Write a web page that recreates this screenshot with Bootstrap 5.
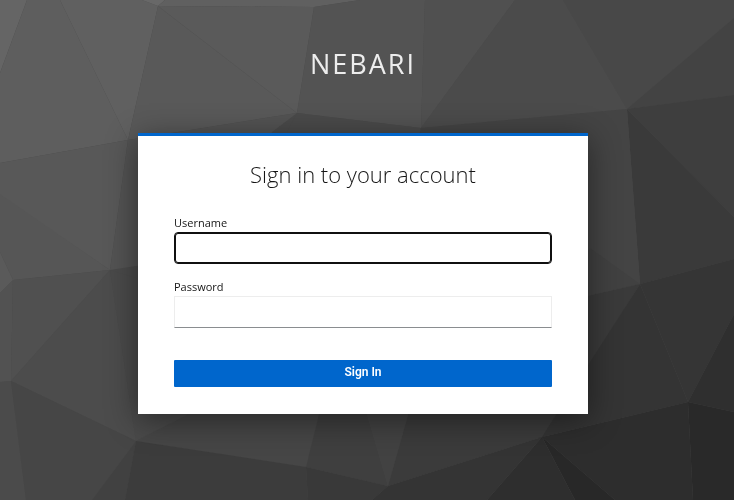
<!DOCTYPE html>
<html lang="en">
<head>
<meta charset="utf-8">
<meta name="viewport" content="width=device-width, initial-scale=1">
<title>Sign in to Nebari</title>
<link href="https://cdn.jsdelivr.net/npm/bootstrap@5.3.0/dist/css/bootstrap.min.css" rel="stylesheet">
<style>
  body { font-family: "Open Sans", sans-serif; background: #444; color: #151515; }
  .backdrop { z-index: -1; }
  .login-page { padding: 48px 16px 48px 8px; }
  .realm-name { font-size: 27px; line-height: 32px; letter-spacing: 2px; color: #ededed; margin-bottom: 53px; }
  .login-panel { max-width: 450px; border-top: 3px solid #06c; padding: 23px 36px 27px; box-shadow: 0 6px 30px rgba(0, 0, 0, .45); }
  .login-title { font-size: 22px; line-height: 30px; font-weight: 300; margin-bottom: 27px; }
  .field-label { font-size: 11px; line-height: 14px; margin-bottom: 2px; }
  .field { height: 32px; border: 1px solid #ededed; border-bottom-color: #8a8d90; border-radius: 0; font-size: 14px; padding: 4px 8px; }
  .field:focus { border-color: #101010; box-shadow: inset 0 0 0 1px #101010; border-radius: 4px; }
  .sign-in { background: #06c; color: #fff; font: 600 12px/17px Roboto, sans-serif; padding: 4px 8px 6px; border: 0; border-radius: 1px; margin-top: 32px; }
  .sign-in:hover { background: #004080; color: #fff; }
</style>
</head>
<body>
<svg class="backdrop position-fixed top-0 start-0 w-100 h-100" viewBox="0 0 734 500" preserveAspectRatio="xMidYMid slice" aria-hidden="true">
  <rect width="734" height="500" fill="#4a4a4a"/>
  <path fill="#656565" d="M0 0H27L0 73Z"/>
  <path fill="#5e5e5e" d="M27 0H60L128 140L0 163V73Z"/>
  <path fill="#606060" d="M60 0H142L158 6L128 140Z"/>
  <path fill="#686868" d="M142 0H165L158 6Z"/>
  <path fill="#606060" d="M165 0H360L314 7L158 6Z"/>
  <path fill="#595959" d="M158 6L297 113L128 140Z"/>
  <path fill="#5a5a5a" d="M158 6L314 7L297 113Z"/>
  <path fill="#585858" d="M0 163L128 140L110 270L0 196Z"/>
  <path fill="#565656" d="M0 194L110 270L13 280L0 252Z"/>
  <path fill="#5a5a5a" d="M0 252L13 280L0 293Z"/>
  <path fill="#525252" d="M0 293L13 280L11 381L0 382Z"/>
  <path fill="#505050" d="M13 280L110 270L11 381Z"/>
  <path fill="#4c4c4c" d="M11 381L110 270L136 441Z"/>
  <path fill="#4b4b4b" d="M0 382L11 381L26 500H0Z"/>
  <path fill="#464646" d="M11 381L136 441L92 500H26Z"/>
  <path fill="#414141" d="M136 441L92 500H125Z"/>
  <path fill="#535353" d="M128 140L297 113L272 132L240 250L110 270Z"/>
  <path fill="#4a4a4a" d="M110 270L240 310L190 413L136 441Z"/>
  <path fill="#464646" d="M136 441L240 388H326L306 467Z"/>
  <path fill="#3c3c3c" d="M136 441L306 467L308 500H125Z"/>
  <path fill="#535353" d="M314 7L360 0H425L421 128L297 113Z"/>
  <path fill="#505050" d="M425 0H515L421 128Z"/>
  <path fill="#4b4b4b" d="M515 0H563L627 109L421 128Z"/>
  <path fill="#484848" d="M563 0H734V18L627 109Z"/>
  <path fill="#434343" d="M734 18V95L627 109Z"/>
  <path fill="#3e3e3e" d="M734 95V217L627 109Z"/>
  <path fill="#3a3a3a" d="M627 109L734 217V259L640 284Z"/>
  <path fill="#4a4a4a" d="M297 113L421 128L410 220H240Z"/>
  <path fill="#444" d="M421 128L627 109L640 284L560 300L400 220Z"/>
  <path fill="#414141" d="M590 248L640 284L560 302Z"/>
  <path fill="#3a3a3a" d="M640 284L560 302L500 413L542 440Z"/>
  <path fill="#343434" d="M640 284L688 402L542 437Z"/>
  <path fill="#353535" d="M640 284L734 259V314L688 402Z"/>
  <path fill="#2f2f2f" d="M734 314V412L688 402Z"/>
  <path fill="#292929" d="M688 402L734 412V500H693Z"/>
  <path fill="#2d2d2d" d="M688 402L693 500H615L542 437Z"/>
  <path fill="#282828" d="M542 437L615 500H575Z"/>
  <path fill="#2e2e2e" d="M542 437L575 500H487Z"/>
  <path fill="#3f3f3f" d="M306 467L325 390H360L388 486Z"/>
  <path fill="#424242" d="M360 390H415L388 486Z"/>
  <path fill="#3b3b3b" d="M415 390H570L542 437L388 486Z"/>
  <path fill="#393939" d="M306 467L388 486L372 500H308Z"/>
  <path fill="#343434" d="M388 486L542 437L487 500H372Z"/>
</svg>

<div class="login-page min-vh-100 d-flex flex-column align-items-center">
  <header class="realm-name text-uppercase text-center">Nebari</header>
  <main class="login-panel bg-white w-100">
    <h1 class="login-title text-center">Sign in to your account</h1>
    <form>
      <div class="mb-3">
        <label class="field-label d-block" for="username">Username</label>
        <input class="field form-control" id="username" name="username" type="text" autocomplete="off" autofocus>
      </div>
      <div>
        <label class="field-label d-block" for="password">Password</label>
        <input class="field form-control" id="password" name="password" type="password" autocomplete="off">
      </div>
      <button class="sign-in btn w-100" type="submit">Sign In</button>
    </form>
  </main>
</div>
<script src="https://cdn.jsdelivr.net/npm/bootstrap@5.3.0/dist/js/bootstrap.bundle.min.js"></script>
</body>
</html>
